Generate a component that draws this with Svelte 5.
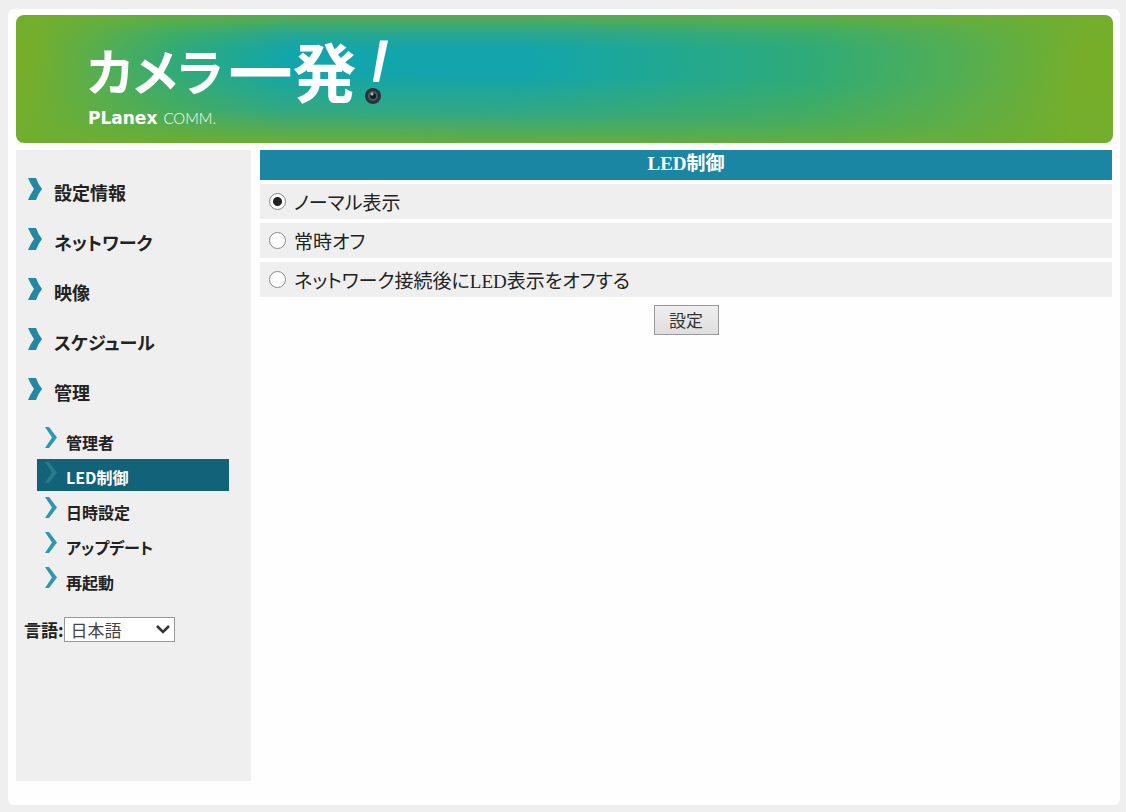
<script lang="ts">
  type MenuItem = { id: string; label: string };

  const menu: MenuItem[] = [
    { id: "info", label: "設定情報" },
    { id: "network", label: "ネットワーク" },
    { id: "video", label: "映像" },
    { id: "schedule", label: "スケジュール" },
    { id: "admin", label: "管理" },
  ];

  const submenu: MenuItem[] = [
    { id: "user", label: "管理者" },
    { id: "led", label: "LED制御" },
    { id: "date", label: "日時設定" },
    { id: "update", label: "アップデート" },
    { id: "reboot", label: "再起動" },
  ];

  const modes: MenuItem[] = [
    { id: "normal", label: "ノーマル表示" },
    { id: "off", label: "常時オフ" },
    { id: "after", label: "ネットワーク接続後にLED表示をオフする" },
  ];

  let active = $state("led");
  let mode = $state("normal");
  let language = $state("ja");

  function select(e: Event, id: string) {
    e.preventDefault();
    active = id;
  }
</script>

<div class="page">
  <div class="frame">
    <header>
      <div class="logo">
        <div class="logo-name">
          <span class="kana">カメラ</span><span class="kanji">一発</span><span class="bang">!<svg viewBox="0 0 16 16" aria-hidden="true">
              <circle cx="8" cy="8" r="8" fill="#26343a" />
              <circle cx="8" cy="8" r="5" fill="#4a5a61" />
              <circle cx="8" cy="8" r="3" fill="#151c20" />
              <circle cx="7" cy="6" r="1.5" fill="#a9bcc2" />
            </svg></span>
        </div>
        <div class="maker"><b>PLanex</b><span>COMM.</span></div>
      </div>
    </header>

    <div class="body">
      <nav>
        <ul class="menu">
          {#each menu as item}
            <li>
              <a href="#{item.id}">
                <svg class="mark" viewBox="0 0 14 22" aria-hidden="true">
                  <path d="M0 0H8Q10 6 14 11Q10 16 8 22H0Q3 15 6 11Q3 7 0 0Z" fill="#2388a0" />
                </svg>
                {item.label}
              </a>
            </li>
          {/each}
        </ul>
        <ul class="submenu">
          {#each submenu as item}
            <li>
              <a href="#{item.id}" class:active={active === item.id} onclick={(e) => select(e, item.id)}>
                <svg class="chevron" viewBox="0 0 12 21" aria-hidden="true">
                  <path d="M0 0H4L12 10.500L4 21H0L7 10.500Z" fill="currentColor" />
                </svg>
                {item.label}
              </a>
            </li>
          {/each}
        </ul>
        <div class="language">
          <label for="language">言語:</label>
          <div class="select">
            <select id="language" bind:value={language}>
              <option value="ja">日本語</option>
              <option value="en">English</option>
            </select>
            <svg viewBox="0 0 14 9" aria-hidden="true">
              <path d="M1 1L7 7L13 1" fill="none" stroke="#333" stroke-width="2.500" />
            </svg>
          </div>
        </div>
      </nav>

      <main>
        <h1>LED制御</h1>
        {#each modes as m}
          <label class="row">
            <input type="radio" name="mode" value={m.id} bind:group={mode} />
            {m.label}
          </label>
        {/each}
        <button type="button">設定</button>
      </main>
    </div>
  </div>
</div>

<style>
  :global(body) {
    margin: 0;
    background: #efeff0;
  }

  .page {
    box-sizing: border-box;
    display: flex;
    min-height: 100vh;
    padding: 9px 6px 7px 8px;
    font-family: "Liberation Serif", "Noto Sans CJK JP", serif;
    font-size: 18px;
    color: #222;
  }

  .frame {
    flex: 1;
    display: flex;
    flex-direction: column;
    padding: 6px 7px 24px 8px;
    border-radius: 6px;
    background: #fefefe;
  }

  header {
    height: 128px;
    border-radius: 8px;
    background:
      linear-gradient(rgba(112, 174, 48, 0.75) 0%, rgba(112, 174, 48, 0.2) 15%, rgba(112, 174, 48, 0) 28%),
      linear-gradient(181deg, rgba(112, 174, 48, 0) 48%, rgba(112, 174, 48, 0.35) 75%, rgba(112, 174, 48, 0.95) 97%),
      linear-gradient(98deg, #76ae2a 2%, #4fae58 9%, #2fab78 15%, #12a5ac 25%, #12a5ac 46%, #2fab78 72%, #52ae54 85%, #76ae2a 96%);
    color: #fff;
    font-family: "Noto Sans CJK JP", sans-serif;
  }

  .logo {
    padding: 18px 0 0 71px;
  }

  .logo-name {
    display: flex;
    align-items: center;
    height: 72px;
    line-height: 72px;
    font-weight: bold;
    white-space: nowrap;
  }

  .kana {
    font-size: 50px;
    font-feature-settings: "palt";
  }

  .kanji {
    padding-left: 5px;
    font-size: 64px;
  }

  .bang {
    position: relative;
    padding-left: 9px;
    font-family: "Liberation Sans", sans-serif;
    font-size: 84px;
    font-style: italic;
    font-weight: normal;
  }

  .bang svg {
    position: absolute;
    left: 8px;
    bottom: 1px;
    width: 16px;
    height: 16px;
  }

  .maker {
    display: flex;
    align-items: baseline;
    gap: 6px;
    padding-left: 1px;
    font-family: Lato, sans-serif;
    font-size: 15px;
    line-height: 26px;
    font-weight: 300;
  }

  .maker b {
    font-family: "DejaVu Sans", sans-serif;
    font-size: 17px;
    font-weight: bold;
  }

  .body {
    flex: 1;
    display: flex;
    gap: 9px;
    margin-top: 7px;
  }

  nav {
    flex: 0 0 235px;
    background: #efefef;
    font-family: "Noto Sans CJK JP", sans-serif;
    font-weight: bold;
  }

  ul {
    margin: 0;
    padding: 0;
    list-style: none;
  }

  a {
    display: flex;
    color: #222;
    text-decoration: none;
    font-feature-settings: "palt";
  }

  .menu {
    padding-top: 18px;
  }

  .menu a {
    gap: 12px;
    height: 50px;
    padding-left: 12px;
    line-height: 48px;
  }

  .mark {
    width: 14px;
    height: 22px;
    margin-top: 10px;
  }

  .submenu {
    padding: 6px 22px 0 21px;
    font-size: 16px;
  }

  .submenu a {
    gap: 9px;
    height: 32px;
    margin-bottom: 3px;
    padding-left: 8px;
    line-height: 36px;
  }

  .chevron {
    width: 12px;
    height: 21px;
    margin-top: 3px;
    color: #3096ad;
  }

  .submenu .active {
    background: #126279;
    color: #fff;
  }

  .active .chevron {
    color: #2a7a8e;
  }

  .language {
    display: flex;
    align-items: center;
    margin-top: 21px;
    padding-left: 8px;
    font-size: 17px;
  }

  .select {
    position: relative;
  }

  select {
    appearance: none;
    width: 111px;
    height: 25px;
    padding: 0 6px;
    border: 1px solid #999;
    border-radius: 0;
    background: #fff;
    color: #444;
    font-family: "Noto Sans CJK JP", sans-serif;
    font-size: 17px;
    line-height: 23px;
  }

  .select svg {
    position: absolute;
    right: 5px;
    top: 8px;
    width: 14px;
    height: 9px;
    pointer-events: none;
  }

  main {
    flex: 1;
    display: flex;
    flex-direction: column;
    gap: 4px;
    margin-right: 1px;
  }

  h1 {
    margin: 0;
    height: 30px;
    background: #1b86a3;
    color: #fff;
    font-size: 19px;
    line-height: 28px;
    text-align: center;
  }

  .row {
    display: flex;
    align-items: center;
    gap: 8px;
    height: 35px;
    padding-left: 9px;
    background: #efefef;
    font-size: 19px;
    font-feature-settings: "palt";
  }

  input {
    appearance: none;
    box-sizing: border-box;
    width: 17px;
    height: 17px;
    margin: 0;
    border: 1px solid #888;
    border-radius: 50%;
    background: #fff;
  }

  input:checked {
    background: radial-gradient(circle, #222 0 4px, #fff 5px);
  }

  button {
    align-self: center;
    width: 65px;
    height: 30px;
    margin-top: 4px;
    padding: 0;
    border: 1px solid #999;
    border-radius: 0;
    background: linear-gradient(#efefef, #dedede);
    color: #333;
    font-family: "Noto Sans CJK JP", sans-serif;
    font-size: 17px;
    line-height: 28px;
  }
</style>
